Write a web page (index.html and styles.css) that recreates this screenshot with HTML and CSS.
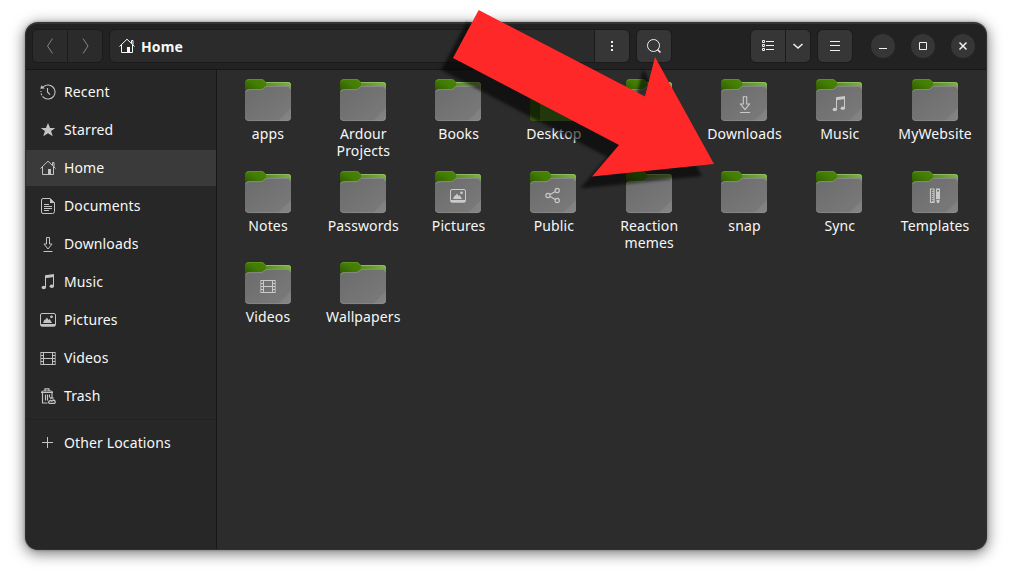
FILE: index.html
```html
<!DOCTYPE html>
<html lang="en">
<head>
<meta charset="utf-8">
<title>Home</title>
<link rel="stylesheet" href="styles.css">
</head>
<body>
<svg class="defs" width="0" height="0" aria-hidden="true">
  <defs>
    <linearGradient id="green-tab" x1="0" y1="1" x2="1" y2="0"><stop offset="0" stop-color="#2b5202"/><stop offset=".55" stop-color="#427c03"/><stop offset="1" stop-color="#4a8607"/></linearGradient>
    <linearGradient id="green-back" x1="0" y1="0" x2="1" y2="0"><stop offset="0" stop-color="#3f7504"/><stop offset=".5" stop-color="#5b9323"/><stop offset="1" stop-color="#7cb046"/></linearGradient>
    <linearGradient id="grey-front" x1="0" y1="0" x2="1" y2="1"><stop offset="0" stop-color="#6b6b6b"/><stop offset="1" stop-color="#7b7b7b"/></linearGradient>
    <symbol id="folder" viewBox="0 0 46 43">
      <path d="M4 3H43Q46 3 46 6V20H0V7Z" fill="url(#green-back)"/>
      <path d="M21 3.5H43Q45.5 3.5 45.7 6" fill="none" stroke="#91bd65" stroke-width=".9"/>
      <path d="M0 14V4Q0 0 4 0H16.5Q18 0 19 1.2L21 3.2V7L17 11V14Z" fill="url(#green-tab)"/>
      <path d="M1 2.3Q2 .5 4 .5H16.5Q18 .5 19 1.7L20.5 3.4" fill="none" stroke="#659b28" stroke-width=".7"/>
      <path d="M0 14Q0 10.2 4 10.2H15.8Q17.3 10.2 18.3 9.2L20 7.8Q20.9 7 22.3 7H42Q46 7 46 11V38.2Q46 42 42 42H4Q0 42 0 38.2Z" fill="url(#grey-front)"/>
      <path d="M.6 13Q1.2 10.6 4 10.6H15.8Q17.3 10.6 18.5 9.5L20.2 8.1Q21 7.4 22.3 7.4H42Q44.8 7.4 45.5 10" fill="none" stroke="#979797" stroke-width=".7"/>
      <path d="M46 29V38.2Q46 42 42 42H33Z" fill="#fff" opacity=".07"/>
      <path d="M.4 38.5Q.6 41.6 4 41.6H42Q45.4 41.6 45.6 38.5" fill="none" stroke="#999" stroke-width=".7" opacity=".65"/>
    </symbol>
    <symbol id="desktop-folder" viewBox="0 0 46 43">
      <path d="M4 0H42Q46 0 46 4V38Q46 42 42 42H4Q0 42 0 38V4Q0 0 4 0Z" fill="#558321"/>
      <path d="M10 0V42H4Q0 42 0 38V4Q0 0 4 0Z" fill="#355b0d"/>
    </symbol>
    <symbol id="home" viewBox="0 0 16 16"><path d="M.5 8.5 8 1.2l7.5 7.3M2.5 7v7.5h11V7M12.5 5V2.5H14V6.8" fill="none" stroke="currentColor"/><path d="M8 9h3v6H8z" fill="currentColor"/></symbol>
    <symbol id="recent" viewBox="0 0 16 16"><path d="M3 3.2A7 7 0 1 1 4 13.700" fill="none" stroke="currentColor" stroke-width="1.1"/><path d="M4 13.700A7 7 0 0 1 1 7" fill="none" stroke="currentColor" stroke-width="1.1" stroke-dasharray="2 1.300"/><path d="M7.500 4v4l2.500 2.600" fill="none" stroke="currentColor" stroke-width="1.1"/><path d="M.3 4.8 1.4 1.2 4.8 4.4Z" fill="currentColor"/></symbol>
    <symbol id="star" viewBox="0 0 16 16"><path d="M8 1 10.1 6H15.2L11.1 9.1 12.7 14.2 8 11.2 3.3 14.2 4.9 9.1.8 6H5.9Z" fill="currentColor"/></symbol>
    <symbol id="document" viewBox="0 0 16 16"><path d="M3 .5h7l4.5 4.5v8.5q0 2-2 2H3q-1.5 0-1.5-1.5V2Q1.5.5 3 .5Z" fill="none" stroke="currentColor"/><path d="M10 0l5 5h-5ZM4 6h5v1H4Zm0 2h8v1H4Zm0 2h8v1H4Zm0 2h5v1H4Z" fill="currentColor"/></symbol>
    <symbol id="download" viewBox="0 0 16 16"><path d="M6.5 1.500h3v6.500H12L8 13 4 8h2.5ZM3.500 15.5h9" fill="none" stroke="currentColor"/></symbol>
    <symbol id="music" viewBox="0 0 16 16"><path d="M5 1.200 14 0V3L5 4.200Z" fill="currentColor"/><path d="M5.5 2v11.3M13.5 1v11" fill="none" stroke="currentColor"/><ellipse cx="3.8" cy="13.5" rx="2.200" ry="1.800" fill="currentColor"/><ellipse cx="11.8" cy="12.3" rx="2.200" ry="1.800" fill="currentColor"/></symbol>
    <symbol id="picture" viewBox="0 0 16 16"><path d="M2 1.5h12q1.5 0 1.5 1.5v9.5q0 1.5-1.5 1.5H2Q.5 14 .5 12.500V3Q.5 1.500 2 1.500Z" fill="none" stroke="currentColor"/><path d="M.5 12h15v1.500q-.4 1-1.500 1H2q-1.100 0-1.500-1ZM3 11l1.300-3 1.200-.5L7 5.500l1.500 2.500 1.200-1L12 11Z" fill="currentColor"/><circle cx="11.500" cy="4.800" r="1.400" fill="currentColor"/></symbol>
    <symbol id="video" viewBox="0 0 16 16"><path d="M.75 2v13M15.250 2v13" fill="none" stroke="currentColor" stroke-width=".8"/><path d="M3.500 2v13M12.500 2v13M3 2.500h10M3 8.500h10M3 14.500h10" fill="none" stroke="currentColor"/><path d="M2 2v13M14 2v13" stroke="currentColor" stroke-width="2" stroke-dasharray="1 2"/></symbol>
    <symbol id="trash" viewBox="0 0 16 16"><path d="M1 4.500h12M1.500 5q0-2 2-2h7q2 0 2 2M5 3V.8h4V3M2.500 5v10H7.500M12 5v4.500M5.500 6.500v6M7.500 6.500v6M9.500 6.500v3" fill="none" stroke="currentColor" stroke-width="1.150"/><path d="M10 10h3.500M10.500 12.300q-2 .5-1.900 2 .2 1.100 1.500 1.100h3.500q1.600 0 1.600-1.500 0-1.600-2-1.900l-1.500 1.200Z" fill="none" stroke="currentColor" stroke-width="1.300"/></symbol>
    <symbol id="plus" viewBox="0 0 16 16"><path d="M2 7.500h11M7.500 2v11" fill="none" stroke="currentColor"/></symbol>
    <symbol id="share" viewBox="0 0 16 16"><g fill="none" stroke="currentColor" stroke-width="1.150"><circle cx="3" cy="8" r="2.100"/><circle cx="12.200" cy="3" r="2.100"/><circle cx="12.200" cy="13" r="2.100"/><path d="m5 7 5.300-3M5 9l5.300 3"/></g></symbol>
    <symbol id="template" viewBox="0 0 16 16"><path d="M3.500 1h3.500v13.500h-3.500Z" fill="none" stroke="currentColor" stroke-width="1.200"/><path d="M5.800 3v11" stroke="currentColor" stroke-dasharray="1 1" stroke-width="1.500"/><path d="M9 .5h4V11l-1 4h-2l-1-4Z" fill="currentColor"/><path d="M10 2h2v1.500h-2Z" fill="#747474"/><path d="M9 11.500h4" stroke="#888"/></symbol>
  </defs>
</svg>

<main class="window">
  <header class="titlebar">
    <div class="group nav">
      <button class="btn flat"><svg width="16" height="20"><path d="M10.500 2.500 5.500 10l5 7.500"/></svg></button>
      <button class="btn flat"><svg width="16" height="20"><path d="m6 2.500 5 7.500-5 7.500"/></svg></button>
    </div>
    <div class="group path">
      <div class="location"><svg class="icon"><use href="#home"/></svg><span>Home</span></div>
      <button class="btn path-menu"><svg width="16" height="16"><path class="solid" d="M7 3h2v2H7zM7 7h2v2H7zM7 11h2v2H7z"/></svg></button>
    </div>
    <div class="group search"><button class="btn"><svg width="16" height="16"><circle cx="7.500" cy="7.500" r="6"/><path class="thick" d="m11.500 11.500 3 3"/></svg></button></div>
    <div class="group view">
      <button class="btn"><svg width="16" height="16"><path d="M2.500 2.500h2v2h-2zM2.500 6.500h2v2h-2zM2.500 10.500h2v2h-2z"/><path d="M6 3.500h8M6 7.500h8M6 11.500h8"/></svg></button>
      <button class="btn narrow"><svg width="16" height="16"><path class="thick" d="m3.500 6 4.500 4 4.500-4"/></svg></button>
    </div>
    <div class="group menu"><button class="btn"><svg width="16" height="16"><path d="M3 3.500h10M3 7.500h10M3 12.500h10"/></svg></button></div>
    <div class="controls">
      <button class="round"><svg width="16" height="16"><path d="M4 10.500h8"/></svg></button>
      <button class="round"><svg width="16" height="16"><path d="M4.500 4.500h7v7h-7z"/></svg></button>
      <button class="round"><svg width="16" height="16"><path class="thick" d="m4.500 4.500 7 7m0-7-7 7"/></svg></button>
    </div>
  </header>
  <div class="body">
    <nav class="sidebar">
      <a class="place"><svg class="icon"><use href="#recent"/></svg><span>Recent</span></a>
      <a class="place"><svg class="icon"><use href="#star"/></svg><span>Starred</span></a>
      <a class="place active"><svg class="icon"><use href="#home"/></svg><span>Home</span></a>
      <a class="place"><svg class="icon"><use href="#document"/></svg><span>Documents</span></a>
      <a class="place"><svg class="icon"><use href="#download"/></svg><span>Downloads</span></a>
      <a class="place"><svg class="icon"><use href="#music"/></svg><span>Music</span></a>
      <a class="place"><svg class="icon"><use href="#picture"/></svg><span>Pictures</span></a>
      <a class="place"><svg class="icon"><use href="#video"/></svg><span>Videos</span></a>
      <a class="place"><svg class="icon"><use href="#trash"/></svg><span>Trash</span></a>
      <hr class="divider">
      <a class="place"><svg class="icon"><use href="#plus"/></svg><span>Other Locations</span></a>
    </nav>
    <section class="files">
      <div class="file"><svg class="folder"><use href="#folder"/></svg><span>apps</span></div>
      <div class="file"><svg class="folder"><use href="#folder"/></svg><span>Ardour<br>Projects</span></div>
      <div class="file"><svg class="folder"><use href="#folder"/></svg><span>Books</span></div>
      <div class="file"><svg class="folder"><use href="#desktop-folder"/></svg><span>Desktop</span></div>
      <div class="file"><svg class="folder"><use href="#folder"/></svg><span>Documents</span></div>
      <div class="file"><svg class="folder"><use href="#folder"/><use href="#download" x="15" y="16" width="18" height="18"/></svg><span>Downloads</span></div>
      <div class="file"><svg class="folder"><use href="#folder"/><use href="#music" x="15" y="17" width="16" height="16"/></svg><span>Music</span></div>
      <div class="file"><svg class="folder"><use href="#folder"/></svg><span>MyWebsite</span></div>
      <div class="file"><svg class="folder"><use href="#folder"/></svg><span>Notes</span></div>
      <div class="file"><svg class="folder"><use href="#folder"/></svg><span>Passwords</span></div>
      <div class="file"><svg class="folder"><use href="#folder"/><use href="#picture" x="15" y="17" width="16" height="16"/></svg><span>Pictures</span></div>
      <div class="file"><svg class="folder"><use href="#folder"/><use href="#share" x="15" y="16.500" width="16" height="16"/></svg><span>Public</span></div>
      <div class="file"><svg class="folder"><use href="#folder"/></svg><span>Reaction<br>memes</span></div>
      <div class="file"><svg class="folder"><use href="#folder"/></svg><span>snap</span></div>
      <div class="file"><svg class="folder"><use href="#folder"/></svg><span>Sync</span></div>
      <div class="file"><svg class="folder"><use href="#folder"/><use href="#template" x="15" y="17" width="16" height="16"/></svg><span>Templates</span></div>
      <div class="file"><svg class="folder"><use href="#folder"/><use href="#video" x="15" y="16" width="16" height="16"/></svg><span>Videos</span></div>
      <div class="file"><svg class="folder"><use href="#folder"/></svg><span>Wallpapers</span></div>
    </section>
  </div>
</main>
<svg class="arrow" viewBox="0 0 1012 578"><path d="M478.700 10 645 96.500 655 57 714 164 592 176.500 619 145 453 58Z"/></svg>
</body>
</html>
```
FILE: styles.css
```css
* { box-sizing: border-box; }
body {
  margin: 0;
  width: 1012px;
  height: 578px;
  padding: 22px 25px 28px;
  overflow: hidden;
  background: #fff;
  color: #f7f7f7;
  font: 14px/17px "Noto Sans", "Open Sans", sans-serif;
  letter-spacing: .13px;
}
.defs { position: absolute; }
.window {
  display: flex;
  flex-direction: column;
  width: 962px;
  height: 528px;
  overflow: hidden;
  border-radius: 13px;
  border: 1px solid #303030;
  border-top: 2px solid #353535;
  background: #2c2c2c;
  box-shadow: 0 3px 14px 1px rgba(0, 0, 0, .5), 0 0 3px rgba(0, 0, 0, .3);
}
.titlebar {
  display: flex;
  align-items: center;
  flex: none;
  height: 46px;
  padding: 0 11px 1px 6px;
  background: #222;
  border-bottom: 1px solid #171717;
}
.group {
  display: flex;
  height: 34px;
  overflow: hidden;
  border: 1px solid #1b1b1b;
  border-radius: 6px;
  background: #2b2b2b;
}
.nav { width: 71px; margin-right: 6px; }
.path { width: 521px; margin-right: 6px; }
.search { width: 36px; margin-right: 78px; }
.view { width: 61px; margin-right: 6px; }
.menu { width: 36px; margin-right: 18px; }
.btn, .round {
  display: flex;
  align-items: center;
  justify-content: center;
  flex: 1;
  padding: 0;
  border: 0;
  background: #363636;
  color: #f1f1f1;
}
.btn + .btn, .path-menu { border-left: 1px solid #1b1b1b; }
.flat { background: #2b2b2b; color: #858585; }
.path-menu { flex: 0 0 35px; }
.narrow { flex: 0 0 25px; }
.btn path, .btn circle, .round path { fill: none; stroke: currentColor; stroke-width: 1; }
.btn .solid { fill: currentColor; stroke: none; }
.btn .thick, .round .thick { stroke-width: 1.5; }
.location {
  display: flex;
  flex: 1;
  align-items: center;
  gap: 6px;
  padding-left: 9px;
  font-weight: 700;
}
.icon { width: 16px; height: 16px; flex: none; }
.controls { display: flex; gap: 16px; }
.round { flex: none; width: 24px; height: 24px; border-radius: 50%; }
.body { display: flex; flex: 1; min-height: 0; }
.sidebar {
  display: flex;
  flex-direction: column;
  gap: 2px;
  width: 191px;
  padding-top: 4px;
  background: #272727;
  border-right: 1px solid #171717;
}
.place {
  display: flex;
  align-items: center;
  gap: 8px;
  height: 36px;
  flex: none;
  padding-left: 14px;
}
.place span { padding-bottom: 2px; }
.place .icon { color: #c4c4c4; }
.active { background: #3a3a3a; }
.divider { width: 100%; height: 1px; margin: 3px 0; border: 0; background: #222; }
.files {
  display: grid;
  grid-template-columns: repeat(8, 95.3px);
  grid-auto-rows: 91.6px;
  align-content: start;
  padding: 9px 0 0 2.88px;
}
.file { display: flex; flex-direction: column; align-items: center; text-align: center; }
.file span { padding-left: 1px; }
.folder { width: 46px; height: 43px; margin-bottom: 3px; color: #cacaca; }
.arrow {
  position: absolute;
  left: 0;
  top: 0;
  width: 1012px;
  height: 578px;
  fill: #ff2828;
  filter: drop-shadow(-12px 12px 1.5px rgba(0, 0, 0, .58));
}
```
